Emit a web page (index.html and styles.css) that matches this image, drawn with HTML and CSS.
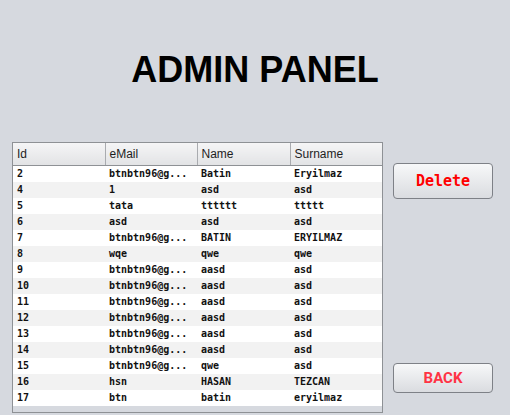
FILE: index.html
```html
<!DOCTYPE html>
<html>
<head>
<meta charset="utf-8">
<link rel="stylesheet" href="styles.css">
</head>
<body>
<h1 class="title">ADMIN PANEL</h1>
<div class="main">
  <div class="table-wrap">
    <table class="grid">
      <colgroup>
        <col class="c1"><col class="c2"><col class="c3"><col class="c4">
      </colgroup>
      <thead>
        <tr><th>Id</th><th>eMail</th><th>Name</th><th class="last">Surname</th></tr>
      </thead>
      <tbody>
        <tr><td>2</td><td>btnbtn96@g...</td><td>Batin</td><td>Eryilmaz</td></tr>
        <tr><td>4</td><td>1</td><td>asd</td><td>asd</td></tr>
        <tr><td>5</td><td>tata</td><td>tttttt</td><td>ttttt</td></tr>
        <tr><td>6</td><td>asd</td><td>asd</td><td>asd</td></tr>
        <tr><td>7</td><td>btnbtn96@g...</td><td>BATIN</td><td>ERYILMAZ</td></tr>
        <tr><td>8</td><td>wqe</td><td>qwe</td><td>qwe</td></tr>
        <tr><td>9</td><td>btnbtn96@g...</td><td>aasd</td><td>asd</td></tr>
        <tr><td>10</td><td>btnbtn96@g...</td><td>aasd</td><td>asd</td></tr>
        <tr><td>11</td><td>btnbtn96@g...</td><td>aasd</td><td>asd</td></tr>
        <tr><td>12</td><td>btnbtn96@g...</td><td>aasd</td><td>asd</td></tr>
        <tr><td>13</td><td>btnbtn96@g...</td><td>aasd</td><td>asd</td></tr>
        <tr><td>14</td><td>btnbtn96@g...</td><td>aasd</td><td>asd</td></tr>
        <tr><td>15</td><td>btnbtn96@g...</td><td>qwe</td><td>asd</td></tr>
        <tr><td>16</td><td>hsn</td><td>HASAN</td><td>TEZCAN</td></tr>
        <tr><td>17</td><td>btn</td><td>batin</td><td>eryilmaz</td></tr>
      </tbody>
    </table>
  </div>
  <div class="actions">
    <button class="btn btn-delete">Delete</button>
    <button class="btn btn-back">BACK</button>
  </div>
</div>
</body>
</html>
```
FILE: styles.css
```css
html, body {
  margin: 0;
  padding: 0;
}
body {
  background: #d6d9df;
  width: 510px;
  height: 415px;
  overflow: hidden;
}
.title {
  margin: 50px 0 0 0;
  height: 40px;
  line-height: 40px;
  font-family: "Liberation Sans", Arial, sans-serif;
  font-weight: bold;
  font-size: 36px;
  text-align: center;
  color: #000;
}
.main {
  display: flex;
  margin-top: 52px;
  padding-left: 12px;
  gap: 10px;
}
.table-wrap {
  box-sizing: border-box;
  width: 371px;
  height: 271px;
  border: 1px solid #8e9195;
  background: #d6d9df;
  overflow: hidden;
}
.grid {
  width: 369px;
  border-collapse: collapse;
  border-spacing: 0;
  table-layout: fixed;
}
.c1 { width: 92px; }
.c2 { width: 92px; }
.c3 { width: 93px; }
.c4 { width: 92px; }
.grid th {
  box-sizing: border-box;
  height: 22px;
  padding: 1px 0 0 4px;
  line-height: 20px;
  text-align: left;
  font-family: "Liberation Sans", Arial, sans-serif;
  font-weight: normal;
  font-size: 12px;
  color: #1e1e1e;
  background: linear-gradient(#f5f5f6, #e2e3e5);
  border-right: 1px solid #a9abaf;
  border-bottom: 1px solid #8e9195;
}
.grid th.last {
  border-right: none;
}
.grid td {
  height: 16px;
  padding: 0 0 0 4px;
  line-height: 16px;
  font-family: "DejaVu Sans Mono", monospace;
  font-weight: bold;
  font-size: 10px;
  color: #111;
  white-space: nowrap;
  overflow: hidden;
}
.grid tbody tr:nth-child(odd) td {
  background: #ffffff;
}
.grid tbody tr:nth-child(even) td {
  background: #f2f2f2;
}
.actions {
  display: flex;
  flex-direction: column;
  width: 100px;
}
.btn {
  box-sizing: border-box;
  width: 100px;
  padding: 0;
  border: 1px solid #7e8187;
  border-radius: 4px;
  background: linear-gradient(#f7f8f9, #dadce0);
  cursor: pointer;
}
.btn-delete {
  margin-top: 21px;
  height: 36px;
  font-family: "DejaVu Sans Mono", monospace;
  font-weight: bold;
  font-size: 15px;
  color: #ff0000;
}
.btn-back {
  margin-top: 164px;
  height: 30px;
  font-family: Roboto, "Liberation Sans", sans-serif;
  font-weight: bold;
  font-size: 15px;
  color: #ff3344;
}
```
